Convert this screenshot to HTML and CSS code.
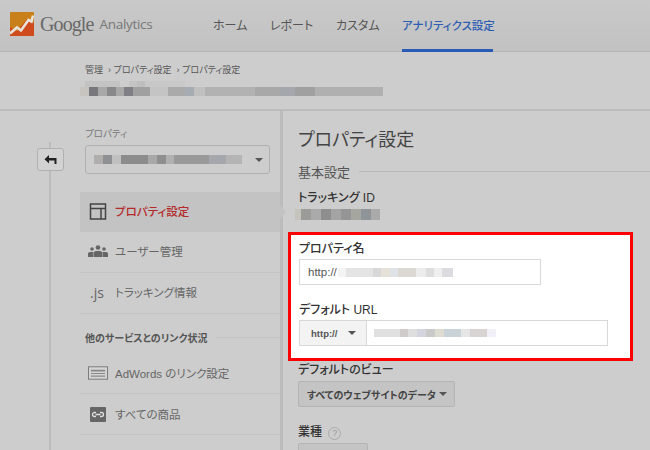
FILE: index.html
```html
<!DOCTYPE html>
<html lang="ja">
<head>
  <meta charset="UTF-8" />
  <title>Google Analytics</title>
  <link rel="stylesheet" href="styles.css">
</head>
<body>
  <header class="topbar">
    <div class="logo">
      <svg class="logo-mark" width="24" height="24" viewBox="0 0 24 24">
        <rect width="24" height="24" rx="1" fill="#c9801a"/>
        <path d="M0 24V15L7 19L17 7L24 11V24Z" fill="#cf4a1c"/>
        <path d="M0 21.5L7 15.5L11 18.5L18.5 8L21.5 9.5L23 3.5" fill="none" stroke="#e8e2d8" stroke-width="2.6"/>
      </svg>
      <span class="logo-google">Google</span>
      <span class="logo-product">Analytics</span>
    </div>
    <nav class="tabs">
      <a class="tab tab-home">ホーム</a>
      <a class="tab tab-report">レポート</a>
      <a class="tab tab-custom">カスタム</a>
      <a class="tab tab-active">アナリティクス設定</a>
    </nav>
  </header>

  <div class="crumbs">
    <div class="crumb-links">管理 &nbsp;› プロパティ設定 &nbsp;› プロパティ設定</div>
    <div class="mosaic mosaic-top"></div>
    <div class="mosaic mosaic-account"></div>
  </div>

  <div class="main">
    <div class="rail">
      <button class="back-btn">
        <svg width="13" height="10" viewBox="0 0 13 10"><path d="M5 0V3H12.5V9H10.5V5.5H5V8.5L0.5 4.2Z" fill="#222"/></svg>
      </button>
    </div>

    <aside class="sidebar">
      <div class="side-label">プロパティ</div>
      <div class="side-select">
        <div class="mosaic mosaic-select"></div>
        <span class="caret"></span>
      </div>
      <ul class="menu menu-main">
        <li class="menu-item menu-selected">
          <svg class="menu-icon" width="17" height="17" viewBox="0 0 17 17"><path d="M1 1H16V16H1ZM1 5.5H16M11.5 5.5V16" fill="none" stroke="#444" stroke-width="1.5"/></svg>
          <span>プロパティ設定</span>
        </li>
        <li class="menu-item">
          <svg class="menu-icon" width="20" height="13" viewBox="0 0 20 13"><g fill="#666"><circle cx="4" cy="4" r="1.8"/><circle cx="10" cy="2.5" r="2.3"/><circle cx="16" cy="4" r="1.8"/><path d="M0 12V8.5Q0 7 2 7H5.500V12ZM6 12V7.500Q6 6 8 6H12Q14 6 14 7.500V12ZM14.500 12V7H18Q20 7 20 8.500V12Z"/></g></svg>
          <span>ユーザー管理</span>
        </li>
        <li class="menu-item">
          <span class="js-icon">.js</span>
          <span>トラッキング情報</span>
        </li>
      </ul>
      <div class="side-heading"><span>他のサービスとのリンク状況</span></div>
      <ul class="menu">
        <li class="menu-item">
          <svg class="menu-icon" width="21" height="14" viewBox="0 0 21 14"><rect x="0.5" y="0.5" width="20" height="13" fill="#d6d6d6" stroke="#777"/><path d="M3 3.500H18V5.500H3ZM3 7H18V8H3ZM3 9.500H18V11H3Z" fill="#888"/></svg>
          <span>AdWords のリンク設定</span>
        </li>
        <li class="menu-item">
          <svg class="menu-icon" width="16" height="15" viewBox="0 0 16 15"><rect width="16" height="15" rx="1" fill="#666"/><path d="M6 5.500H4.500a2 2 0 0 0 0 4H6M10 5.500H11.500a2 2 0 0 1 0 4H10M5.500 7.500H10.500" fill="none" stroke="#ddd" stroke-width="1.300"/></svg>
          <span>すべての商品</span>
        </li>
      </ul>
    </aside>

    <section class="content">
      <h1 class="page-title">プロパティ設定</h1>
      <div class="section-title"><span>基本設定</span></div>
      <div class="field-label field-tracking">トラッキング ID</div>
      <div class="mosaic mosaic-id"></div>

      <div class="highlight">
        <div class="field-label">プロパティ名</div>
        <div class="text-input">
          <span>http://</span>
          <div class="mosaic mosaic-name"></div>
        </div>
        <div class="field-label field-url">デフォルト URL</div>
        <div class="url-group">
          <div class="scheme"><span>http://</span><span class="caret"></span></div>
          <div class="url-input"><div class="mosaic mosaic-url"></div></div>
        </div>
      </div>

      <div class="field-label field-view">デフォルトのビュー</div>
      <div class="gray-select view-select"><span>すべてのウェブサイトのデータ</span><span class="caret"></span></div>
      <div class="field-label field-industry">業種 <span class="help">?</span></div>
      <div class="gray-select industry-select"></div>
    </section>
  </div>
</body>
</html>
```

FILE: styles.css
```css
* {
  box-sizing: border-box;
}
html, body {
  margin: 0;
  padding: 0;
}
body {
  width: 650px;
  height: 450px;
  overflow: hidden;
  background: #cdcdcd;
  color: #444;
  font-family: "Liberation Sans", "Noto Sans CJK JP", sans-serif;
  font-feature-settings: "palt";
}
.topbar {
  height: 52px;
  display: flex;
  background: linear-gradient(to bottom, #c9c9c9, #c2c2c2);
  border-bottom: 1px solid #b4b4b4;
}
.logo {
  display: flex;
  align-items: center;
  width: 213px;
  padding: 0 0 3px 10px;
}
.logo-mark {
  flex: none;
  margin-right: 6px;
}
.logo-google {
  font-family: "Liberation Serif", serif;
  font-size: 20px;
  color: #6a6a6a;
  letter-spacing: -0.9px;
  margin-right: 6px;
}
.logo-product {
  font-family: "Open Sans", sans-serif;
  font-size: 13.5px;
  color: #777;
  letter-spacing: -0.3px;
}
.tabs {
  display: flex;
}
.tab {
  font-size: 12px;
  line-height: 52px;
  color: #555;
}
.tab-home { width: 57px; }
.tab-report { width: 66px; }
.tab-custom { width: 66px; }
.tab-active {
  width: 91px;
  height: 52px;
  color: #2f5fb3;
  font-size: 11.5px;
  font-weight: 500;
  white-space: nowrap;
  border-bottom: 3px solid #2a5cb5;
}
.crumbs {
  height: 59px;
  padding: 12px 0 0 85px;
  border-bottom: 2px solid #bcbcbc;
}
.crumb-links {
  font-size: 9px;
  line-height: 12px;
  color: #555;
}
.mosaic {
  filter: blur(0.5px);
}
.mosaic-top {
  width: 120px;
  height: 6px;
  margin-top: 5px;
  background: linear-gradient(to right, #c3c3c3 0 35px, #cdcdcd 35px 44px, #c4c4c4 44px 52px, #bebebe 52px 60px, #c8c8c8 60px 100px, #cdcdcd 100px);
}
.mosaic-account {
  width: 303px;
  height: 9px;
  margin-left: -5px;
  background: linear-gradient(to right, #c7c4bf 0 9px, #77777c 9px 18px, #a8a8a8 18px 27px, #88888a 27px 36px, #a8a8a8 36px 44px, #7f7f85 44px 53px, #a0a0a0 53px 70px, #c4c4c4 70px 88px, #aaa 88px 105px, #a6acb2 105px 114px, #c0c0c0 114px 125px, #b2b2b2 125px 175px, #a8a8a8 175px 200px, #a4a8ac 200px 215px, #a0a0a0 215px 235px, #b0b0b0 235px 303px);
}
.main {
  display: flex;
  height: 339px;
}
.rail {
  width: 31px;
  margin: 31px 0 0 49px;
  border-left: 2px solid #bcbcbc;
  flex: none;
}
.back-btn {
  display: flex;
  align-items: center;
  justify-content: center;
  width: 27px;
  height: 23px;
  margin: 6px 0 0 -14px;
  padding: 0;
  background: #d2d2d2;
  border: 1px solid #b0b0b0;
  border-radius: 3px;
}
.sidebar {
  width: 203px;
  flex: none;
  padding-top: 16px;
  border-right: 3px solid #bcbcbc;
}
.side-label {
  margin-left: 5px;
  font-size: 9.5px;
  line-height: 14px;
  color: #777;
}
.side-select {
  display: flex;
  align-items: center;
  justify-content: space-between;
  width: 185px;
  height: 29px;
  margin: 4px 0 18px 5px;
  padding: 0 6px 0 8px;
  border: 1px solid #b0b0b0;
  border-radius: 3px;
}
.mosaic-select {
  width: 148px;
  height: 9px;
  background: linear-gradient(to right, #b0aeac 0 9px, #8f9094 9px 18px, #c0c0c0 18px 27px, #8c8c8c 27px 54px, #a8a8a8 54px 63px, #8f8f8f 63px 72px, #b0b0b0 72px 80px, #999 80px 115px, #a4a8ac 115px 132px, #b4b4b4 132px 148px);
}
.caret {
  width: 0;
  height: 0;
  border-left: 4px solid transparent;
  border-right: 4px solid transparent;
  border-top: 4px solid #555;
}
.menu {
  list-style: none;
  margin: 0;
  padding: 0;
}
.menu-item {
  position: relative;
  display: flex;
  align-items: center;
  height: 41px;
  padding-left: 8px;
  font-size: 11.5px;
  color: #666;
  border-bottom: 1px solid #c4c4c4;
}
.menu-main .menu-item {
  padding-bottom: 2px;
}
.menu-selected {
  height: 40px;
  background: #c3c3c3;
  color: #b52a2a;
  font-weight: 500;
  border-bottom: 0;
}
.menu-selected::after {
  content: "";
  position: absolute;
  left: 200px;
  top: 13px;
  border-top: 7px solid transparent;
  border-bottom: 7px solid transparent;
  border-left: 6px solid #c3c3c3;
}
.menu-icon {
  flex: none;
  margin-right: 7px;
  width: 20px;
}
.js-icon {
  width: 25px;
  margin-left: 2px;
  font-family: "Open Sans", sans-serif;
  font-size: 14px;
  color: #666;
}
.side-heading {
  display: flex;
  align-items: center;
  gap: 9px;
  height: 39px;
  padding: 8px 0 0 5px;
  font-size: 10px;
  font-weight: 700;
  color: #555;
}
.side-heading::after {
  content: "";
  flex: 1;
  height: 1px;
  background: #c4c4c4;
}
.content {
  flex: 1;
  padding-left: 15px;
}
.page-title {
  margin: 17px 0 0;
  font-size: 18px;
  line-height: 25px;
  font-weight: 400;
  color: #444;
}
.section-title {
  display: flex;
  align-items: center;
  gap: 9px;
  height: 18px;
  margin-top: 9px;
  font-size: 13px;
  color: #555;
}
.section-title::after {
  content: "";
  flex: 1;
  height: 1px;
  background: #b8b8b8;
}
.field-label {
  font-size: 12px;
  line-height: 16px;
  font-weight: 500;
  color: #333;
}
.field-tracking {
  margin-top: 10px;
}
.mosaic-id {
  width: 85px;
  height: 11px;
  margin: 3px 0 0 -3px;
  background: linear-gradient(to right, #c5c3bc 0 6px, #9b9b98 6px 16px, #aaa 16px 26px, #8e8e8e 26px 36px, #a4a4a4 36px 46px, #959595 46px 56px, #a6a6a0 56px 66px, #8f9498 66px 76px, #aaa 76px 85px);
}
.highlight {
  width: 345px;
  height: 129px;
  margin: 12px 0 0 -10px;
  padding: 6px 0 0 8px;
  background: #fff;
  border: 3px solid #f00;
}
.text-input {
  display: flex;
  align-items: center;
  gap: 1px;
  width: 242px;
  height: 26px;
  margin-top: 2px;
  padding: 0 0 0 8px;
  border: 1px solid #d8d8d8;
  font-size: 11.5px;
  color: #555;
}
.mosaic-name {
  width: 115px;
  height: 9px;
  background: linear-gradient(to right, #f4f4f4 0 8px, #e4e4e4 8px 35px, #d8d8d8 35px 43px, #e6e2da 43px 52px, #dfe3e8 52px 60px, #dcd8d4 60px 78px, #ececec 78px 88px, #ddd 88px 96px, #efefef 96px 104px, #dcdce0 104px 115px);
}
.field-url {
  margin-top: 17px;
}
.url-group {
  display: flex;
  width: 309px;
  height: 26px;
  margin-top: 2px;
  border: 1px solid #d8d8d8;
}
.scheme {
  display: flex;
  align-items: center;
  gap: 11px;
  width: 67px;
  flex: none;
  padding-left: 11px;
  background: #f3f3f3;
  border-right: 1px solid #d8d8d8;
  font-size: 9.5px;
  font-weight: 700;
  color: #555;
}
.url-input {
  flex: 1;
  display: flex;
  align-items: center;
  padding-left: 7px;
}
.mosaic-url {
  width: 122px;
  height: 8px;
  background: linear-gradient(to right, #e0e0e0 0 26px, #cfcbc9 26px 34px, #dedede 34px 43px, #d4d4de 43px 52px, #c9c9c9 52px 61px, #dedbd0 61px 70px, #c9d2d6 70px 87px, #e6e6e6 87px 96px, #d8d4d4 96px 113px, #f0f0f6 113px 122px);
}
.field-view {
  margin-top: 1px;
}
.gray-select {
  display: flex;
  align-items: center;
  justify-content: space-between;
  height: 26px;
  margin-top: 3px;
  background: #c4c4c4;
  border: 1px solid #b4b4b4;
  border-radius: 2px;
}
.view-select {
  width: 157px;
  padding: 0 7px 0 8px;
  font-size: 10px;
  font-weight: 700;
  color: #444;
  white-space: nowrap;
}
.field-industry {
  margin-top: 17px;
}
.help {
  display: inline-block;
  width: 13px;
  height: 13px;
  margin-left: 3px;
  border: 1px solid #aaa;
  border-radius: 50%;
  font-size: 9px;
  line-height: 11px;
  font-weight: 400;
  text-align: center;
  color: #999;
}
.industry-select {
  width: 70px;
}
```
